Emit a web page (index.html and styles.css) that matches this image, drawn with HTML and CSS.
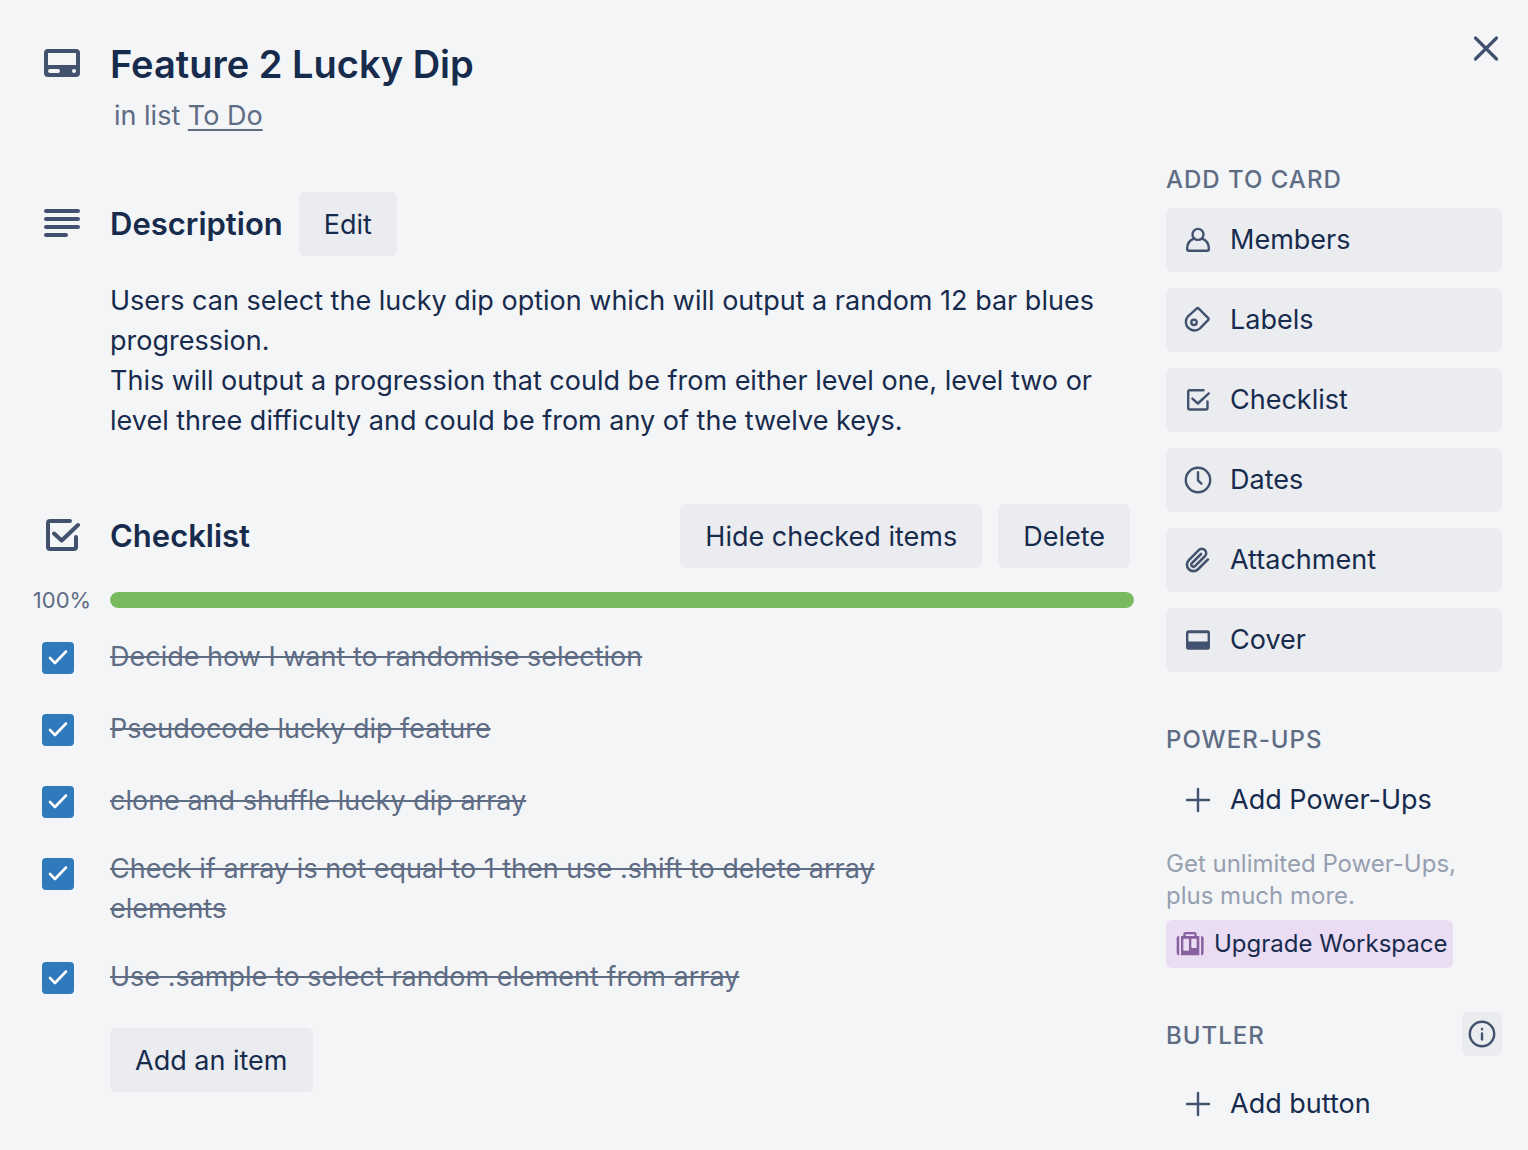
FILE: index.html
```html
<!DOCTYPE html>
<html lang="en">
<head>
<meta charset="utf-8">
<meta name="viewport" content="width=device-width, initial-scale=1">
<title>Feature 2 Lucky Dip</title>
<link rel="stylesheet" href="styles.css">
</head>
<body>
<svg class="sprite" aria-hidden="true">
  <symbol id="tick" viewBox="0 0 32 32"><path d="M8 16l5 5 11-11.500" stroke="#fff" stroke-width="2.600"/></symbol>
  <symbol id="plus" viewBox="0 0 32 32"><path d="M16 5v22M5 16h22"/></symbol>
</svg>
<div class="card">
  <header class="header">
    <div class="row heading">
      <span class="gutter title-icon">
        <svg width="36" height="28" viewBox="0 0 36 28" class="solid" aria-hidden="true"><path fill-rule="evenodd" d="M4 0H32a4 4 0 0 1 4 4V24a4 4 0 0 1-4 4H4a4 4 0 0 1-4-4V4a4 4 0 0 1 4-4ZM4 4V16H32V4ZM6 20a2 2 0 0 0 0 4h8a2 2 0 0 0 0-4ZM30 20a2 2 0 1 0 0 4 2 2 0 0 0 0-4Z"/></svg>
      </span>
      <div class="titles">
        <h1>Feature 2 Lucky Dip</h1>
        <p class="in-list">in list <a href="#">To Do</a></p>
      </div>
    </div>
    <button class="close" type="button" aria-label="Close"><svg width="32" height="32" viewBox="0 0 32 32"><path d="M5.500 6l21 21M26.500 6l-21 21"/></svg></button>
  </header>

  <div class="columns">
    <main class="main">
      <section class="description">
        <div class="row section-head">
          <span class="gutter"><svg class="bold" width="36" height="32" viewBox="0 0 36 32" aria-hidden="true"><path d="M2 3h32M2 11h32M2 19h32M2 27h20"/></svg></span>
          <div class="head-content">
            <h2>Description</h2>
            <button class="btn" type="button">Edit</button>
          </div>
        </div>
        <p class="text">Users can select the lucky dip option which will output a random 12 bar blues progression.<br>This will output a progression that could be from either level one, level two or level three difficulty and could be from any of the twelve keys.</p>
      </section>

      <section class="checklist">
        <div class="row section-head">
          <span class="gutter"><svg class="bold" width="36" height="34" viewBox="0 0 36 34" aria-hidden="true"><path d="M26 2H6a2 2 0 0 0-2 2v24a2 2 0 0 0 2 2h24a2 2 0 0 0 2-2V18M10 14.500l7.700 7L34 6"/></svg></span>
          <div class="head-content tools">
            <h2>Checklist</h2>
            <button class="btn" type="button">Hide checked items</button>
            <button class="btn" type="button">Delete</button>
          </div>
        </div>
        <div class="row progress">
          <span class="gutter percent" id="pct">100%</span>
          <div class="track" role="progressbar" aria-labelledby="pct" aria-valuenow="100"><div class="fill" style="width:100%"></div></div>
        </div>
        <ul class="items">
          <li class="row item"><span class="check"><input type="checkbox" id="i1" checked><svg width="32" height="32"><use href="#tick"/></svg></span><label for="i1">Decide how I want to randomise selection</label></li>
          <li class="row item"><span class="check"><input type="checkbox" id="i2" checked><svg width="32" height="32"><use href="#tick"/></svg></span><label for="i2">Pseudocode lucky dip feature</label></li>
          <li class="row item"><span class="check"><input type="checkbox" id="i3" checked><svg width="32" height="32"><use href="#tick"/></svg></span><label for="i3">clone and shuffle lucky dip array</label></li>
          <li class="row item"><span class="check"><input type="checkbox" id="i4" checked><svg width="32" height="32"><use href="#tick"/></svg></span><label for="i4">Check if array is not equal to 1 then use .shift to delete array elements</label></li>
          <li class="row item"><span class="check"><input type="checkbox" id="i5" checked><svg width="32" height="32"><use href="#tick"/></svg></span><label for="i5">Use .sample to select random element from array</label></li>
        </ul>
        <button class="btn add-item" type="button">Add an item</button>
      </section>
    </main>

    <aside class="sidebar">
      <section class="group">
        <h3>Add to card</h3>
        <div class="actions">
          <button class="action" type="button"><svg width="32" height="32" viewBox="0 0 32 32"><circle cx="16" cy="10.400" r="5.500"/><path d="M12.200 14.700C8 16 5.200 19.700 5.200 24.800V25.600q0 1.200 1.200 1.200H25.600q1.200 0 1.200-1.200V24.800C26.800 19.700 24 16 19.800 14.700"/></svg>Members</button>
          <button class="action" type="button"><svg width="32" height="32" viewBox="0 0 32 32"><path d="M14.900 4.300q.8-.8 1.600 0L26.300 14.200q.8.800 0 1.600L18 24.300A8.500 8.500 0 0 1 6 12.300Z"/><circle cx="12" cy="18.300" r="2.700"/></svg>Labels</button>
          <button class="action" type="button"><svg width="32" height="32" viewBox="0 0 32 32"><path d="M21.500 6.200H7.400a1.200 1.200 0 0 0-1.200 1.200V24.300a1.200 1.200 0 0 0 1.200 1.200H24.300a1.200 1.200 0 0 0 1.200-1.200V17.500M10.400 14.600L15.900 19.500 26.800 9.400"/></svg>Checklist</button>
          <button class="action" type="button"><svg width="32" height="32" viewBox="0 0 32 32"><circle cx="16" cy="16" r="12.200"/><path d="M16 8.200V16.400L19.400 19.600"/></svg>Dates</button>
          <button class="action" type="button"><svg width="32" height="32" viewBox="0 0 32 32"><path transform="translate(2.800 3.400) scale(1.080)" d="M21.440 11.050l-9.190 9.190a6 6 0 0 1-8.490-8.490l9.190-9.190a4 4 0 0 1 5.660 5.660l-9.200 9.190a2 2 0 0 1-2.830-2.830l8.490-8.480"/></svg>Attachment</button>
          <button class="action" type="button"><svg class="solid" width="32" height="32" viewBox="0 0 32 32"><path fill-rule="evenodd" d="M6.500 6.300H25.500A2.500 2.500 0 0 1 28 8.800V23.300a2.500 2.500 0 0 1-2.500 2.500H6.500A2.500 2.500 0 0 1 4 23.300V8.800A2.500 2.500 0 0 1 6.500 6.300ZM6.400 9.200V17.400H25.600V9.200Z"/></svg>Cover</button>
        </div>
      </section>

      <section class="group">
        <h3>Power-Ups</h3>
        <button class="action plain" type="button"><svg width="32" height="32"><use href="#plus"/></svg>Add Power-Ups</button>
        <p class="hint">Get unlimited Power-Ups, plus much more.</p>
        <button class="upgrade" type="button"><svg width="28" height="28" viewBox="0 0 28 28"><path fill-rule="evenodd" d="M5 6H7.300V4.200A2.200 2.200 0 0 1 9.500 2h9a2.200 2.200 0 0 1 2.200 2.200V6H23.300V25.300H5ZM9.600 4.300V6h8.800V4.300ZM8.300 8.700a1 1 0 0 0-1 1v10a1 1 0 0 0 1 1H12a1 1 0 0 0 1-1v-10a1 1 0 0 0-1-1ZM16.300 8.700a1 1 0 0 0-1 1v7.300a1 1 0 0 0 1 1h3.400a1 1 0 0 0 1-1V9.700a1 1 0 0 0-1-1ZM3.200 6V25.300A2.500 2.500 0 0 1 .7 22.800V8.500A2.500 2.500 0 0 1 3.200 6ZM25.100 6a2.500 2.500 0 0 1 2.500 2.500V22.800a2.500 2.500 0 0 1-2.500 2.500Z"/></svg>Upgrade Workspace</button>
      </section>

      <section class="group butler">
        <div class="butler-head">
          <h3>Butler</h3>
          <button class="info" type="button" aria-label="About Butler"><svg width="32" height="32" viewBox="0 0 32 32"><circle cx="16" cy="16" r="12.200"/><path d="M16 15.400v6M16 11v.2"/></svg></button>
        </div>
        <button class="action plain" type="button"><svg width="32" height="32"><use href="#plus"/></svg>Add button</button>
      </section>
    </aside>
  </div>
</div>
</body>
</html>
```
FILE: styles.css
```css
* {
  box-sizing: border-box;
}

body {
  margin: 0;
  background: #f4f5f7;
  color: #172b4d;
  font-family: Inter, "Liberation Sans", sans-serif;
  font-size: 27px;
  line-height: 40px;
}

h1, h2, h3, p, ul {
  margin: 0;
  padding: 0;
}

h1 {
  font-size: 38px;
  font-weight: 600;
  line-height: 48px;
}

h2 {
  font-size: 31px;
  font-weight: 600;
}

h3 {
  color: #5e6c84;
  font-size: 24px;
  font-weight: 500;
  line-height: 32px;
  letter-spacing: 1px;
  text-transform: uppercase;
}

button {
  border: 0;
  border-radius: 6px;
  background: #eaecf0;
  color: inherit;
  font: inherit;
  cursor: pointer;
}

svg {
  display: block;
  flex: none;
  fill: none;
  stroke: #42526e;
  stroke-width: 2.4;
  stroke-linecap: round;
  stroke-linejoin: round;
}

.bold {
  stroke-width: 4;
}

.solid {
  fill: #42526e;
  stroke: none;
}

.sprite {
  display: none;
}

.card {
  padding: 32px 26px 14px 34px;
}

.row {
  display: grid;
  grid-template-columns: 56px minmax(0, 1fr);
  column-gap: 20px;
}

.gutter {
  display: flex;
  align-items: center;
  justify-content: center;
}

/* Header */
.header {
  display: flex;
  align-items: flex-start;
  justify-content: space-between;
}

.heading {
  padding-top: 8px;
}

.title-icon {
  height: 46px;
}

.in-list {
  margin-top: 8px;
  padding-left: 4px;
  color: #5e6c84;
}

.in-list a {
  color: inherit;
  text-decoration-thickness: 2px;
  text-underline-offset: 4px;
}

.close {
  padding: 0;
  background: none;
}

.close svg {
  stroke-width: 3.2;
}

/* Columns */
.columns {
  display: grid;
  grid-template-columns: minmax(0, 1fr) 336px;
  column-gap: 32px;
  padding-top: 28px;
}

.main {
  padding-top: 28px;
}

.head-content {
  display: flex;
  align-items: center;
  gap: 16px;
}

.tools {
  padding-right: 4px;
}

.tools h2 {
  flex: 1;
}

.btn {
  min-height: 64px;
  padding: 13px 25px 11px;
}

.text {
  margin: 25px 0 63px 76px;
}

/* Checklist */
.progress {
  align-items: center;
  margin-top: 16px;
}

.percent {
  color: #5e6c84;
  font-size: 22px;
  line-height: 32px;
}

.track {
  height: 16px;
  border-radius: 8px;
  background: #e2e4ea;
  overflow: hidden;
}

.fill {
  height: 100%;
  border-radius: 8px;
  background: #78bb5e;
}

.items {
  padding-top: 4px;
  list-style: none;
}

.item {
  align-items: center;
  min-height: 72px;
  padding: 13px 144px 11px 0;
  color: #5e6c84;
  text-decoration: line-through;
  text-decoration-thickness: 2px;
}

.check {
  display: grid;
  align-self: start;
  padding: 9px 0 0 8px;
}

.check input,
.check svg {
  grid-area: 1 / 1;
  width: 32px;
  height: 32px;
  margin: 0;
}

.check input {
  appearance: none;
  border-radius: 4px;
  background: #2f7abd;
}

.check svg {
  pointer-events: none;
}

.add-item {
  margin: 16px 0 0 76px;
}

/* Sidebar */
.group + .group {
  margin-top: 52px;
}

.group + .butler {
  margin-top: 44px;
}

.group h3 {
  margin-bottom: 12px;
}

.actions {
  display: grid;
  gap: 16px;
}

.action {
  display: flex;
  align-items: center;
  gap: 16px;
  width: 100%;
  min-height: 64px;
  padding: 0 16px;
}

.plain {
  background: none;
}

.hint {
  margin: 16px 0 8px;
  color: #97a0af;
  font-size: 24px;
  line-height: 32px;
}

.upgrade {
  display: flex;
  align-items: center;
  gap: 10px;
  min-height: 48px;
  padding: 0 6px 0 10px;
  background: #eadcf3;
  font-size: 24px;
  line-height: 32px;
}

.upgrade svg {
  fill: #89609e;
  stroke: none;
}

.butler-head {
  display: flex;
  align-items: center;
  justify-content: space-between;
  margin-bottom: 16px;
}

.butler-head h3 {
  margin: 0;
  padding-top: 4px;
}

.info {
  padding: 6px 4px;
}
```
